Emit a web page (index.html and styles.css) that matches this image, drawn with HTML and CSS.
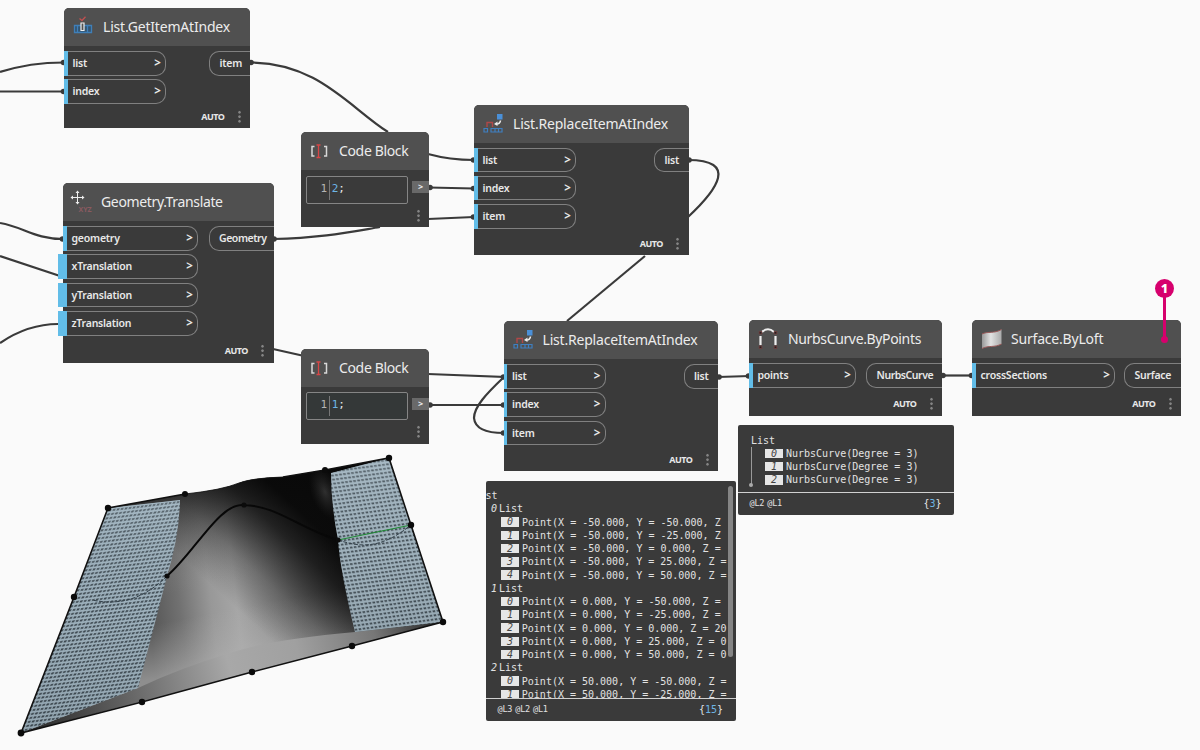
FILE: index.html
```html
<!DOCTYPE html>
<html lang="en">
<head>
<meta charset="utf-8">
<title>Surface by loft graph</title>
<link rel="stylesheet" href="styles.css">
</head>
<body>
<main class="canvas">
<svg class="layer" width="1200" height="750" viewBox="0 0 1200 750">
  <defs>
    <linearGradient id="body" gradientUnits="userSpaceOnUse" x1="145" y1="585" x2="355" y2="560">
      <stop offset="0" stop-color="#555"/><stop offset=".15" stop-color="#717171"/><stop offset=".3" stop-color="#989898"/><stop offset=".42" stop-color="#a6a6a6"/><stop offset=".6" stop-color="#8c8c8c"/><stop offset="1" stop-color="#4a4a4a"/>
    </linearGradient>
    <linearGradient id="shade" gradientUnits="userSpaceOnUse" x1="240" y1="612" x2="318" y2="528">
      <stop offset="0" stop-color="#111" stop-opacity="0"/><stop offset=".35" stop-color="#111" stop-opacity=".3"/><stop offset=".75" stop-color="#0c0c0c" stop-opacity=".8"/><stop offset="1" stop-color="#060606" stop-opacity=".95"/>
    </linearGradient>
    <linearGradient id="fall" gradientUnits="userSpaceOnUse" x1="240" y1="480" x2="275" y2="655">
      <stop offset="0" stop-color="#222" stop-opacity=".7"/><stop offset=".2" stop-color="#444" stop-opacity=".35"/><stop offset=".55" stop-color="#999" stop-opacity="0"/><stop offset=".7" stop-color="#b0b0b0" stop-opacity="0"/><stop offset="1" stop-color="#b4b4b4" stop-opacity=".6"/>
    </linearGradient>
    <radialGradient id="glow" gradientUnits="userSpaceOnUse" cx="0" cy="0" r="1" gradientTransform="translate(325 492) rotate(70) scale(28 14)">
      <stop offset="0" stop-color="#555" stop-opacity=".5"/><stop offset="1" stop-color="#333" stop-opacity="0"/>
    </radialGradient>
    <linearGradient id="lip" gradientUnits="userSpaceOnUse" x1="21" y1="733" x2="443" y2="622">
      <stop offset="0" stop-color="#222"/><stop offset=".25" stop-color="#626262"/><stop offset=".5" stop-color="#a8a8a8"/><stop offset=".66" stop-color="#a0a0a0"/><stop offset=".84" stop-color="#777"/><stop offset="1" stop-color="#222"/>
    </linearGradient>
    <linearGradient id="tint" x1="0" y1="0" x2="0" y2="1">
      <stop offset="0" stop-color="#a9bac4" stop-opacity=".3"/><stop offset=".45" stop-color="#6c7a83" stop-opacity=".12"/><stop offset="1" stop-color="#333d44" stop-opacity=".15"/>
    </linearGradient>
    <pattern id="meshL" width="4" height="4" patternUnits="userSpaceOnUse" patternTransform="matrix(1 -.12 -.4 1 0 0)">
      <rect width="4" height="4" fill="#a4b8c4"/><rect width="2.700" height="1.900" x=".7" y="1" fill="#38434b"/>
    </pattern>
    <pattern id="meshR" width="4" height="4" patternUnits="userSpaceOnUse" patternTransform="matrix(1 -.13 .26 1 0 0)">
      <rect width="4" height="4" fill="#a8bbc6"/><rect width="2.600" height="1.700" x=".7" y="1" fill="#3d4850"/>
    </pattern>
    <clipPath id="outline"><path d="M108 508L185 494Q222 490 239 483Q252 478 283 477L325 470L389 458L411 525L443 622L352 646L252 672L142 702L21 733L74 597Z"/></clipPath>
  </defs>

  <!-- lofted surface -->
  <g clip-path="url(#outline)">
    <rect x="15" y="450" width="435" height="290" fill="url(#body)"/>
    <rect x="15" y="450" width="435" height="290" fill="url(#fall)"/>
    <rect x="15" y="450" width="435" height="290" fill="url(#shade)"/>
    <rect x="290" y="460" width="60" height="70" fill="url(#glow)"/>
    <path d="M443 622L355 632Q268 640 230 653Q180 668 138 688L21 733L252 672L443 622Z" fill="url(#lip)"/>
    <path d="M108 508L180 500Q179 537 167 576L138 688L21 733L74 597Z" fill="url(#meshL)"/>
    <path d="M108 508L180 500Q179 537 167 576L138 688L21 733L74 597Z" fill="url(#tint)"/>
    <path d="M331 473L389 458L411 525L443 622L355 632Q340 570 338 540Q331 504 331 473Z" fill="url(#meshR)"/>
    <path d="M331 473L389 458L411 525L443 622L355 632Q340 570 338 540Q331 504 331 473Z" fill="url(#tint)"/>
  </g>
  <g class="edge">
    <path d="M185 494L108 508L74 597L21 733L142 702L252 672L352 646L443 622L411 525L389 458L325 470L283 477"/>
    <path class="edge-thin" d="M185 494Q222 490 239 483Q252 478 283 477"/>
    <path class="edge-curve" d="M167 576C195 552 220 502 244 505C278 506 300 529 338 540"/>
    <path class="edge-dash" d="M167 576C148 595 124 607 92 600M338 540C359 547 380 550 411 525"/>
    <path class="edge-green" d="M338 540L411 525"/>
  </g>
  <g fill="#0b0b0b">
    <circle cx="108" cy="508" r="3.2"/><circle cx="185" cy="494" r="3"/><circle cx="325" cy="470" r="3"/><circle cx="389" cy="458" r="3.2"/><circle cx="411" cy="525" r="3.2"/><circle cx="443" cy="622" r="3.2"/><circle cx="352" cy="646" r="3.2"/><circle cx="252" cy="672" r="3.2"/><circle cx="142" cy="702" r="3.2"/><circle cx="21" cy="733" r="3.4"/><circle cx="74" cy="597" r="3.2"/><circle cx="167" cy="576" r="2.6"/><circle cx="244" cy="505" r="2.6"/><circle cx="338" cy="540" r="2.6"/>
  </g>

  <!-- wires -->
  <g class="wire">
    <path d="M0 72Q30 62.500 64 62.500"/>
    <path d="M0 91.500H64"/>
    <path d="M250 62.500C318 62.500 350 108 388 132"/>
    <path d="M0 223C24 227 34 239 64 239"/>
    <path d="M0 256L60 276"/>
    <path d="M0 343Q28 324 58 324"/>
    <path d="M273 239C322 238 350 232 380 227"/>
    <path d="M428 154Q450 160 474 160"/>
    <path d="M429 187.500L474 188.500"/>
    <path d="M428 219L474 217"/>
    <path d="M688 160C738 160 718 189 688 217"/>
    <path d="M645 256L567 321"/>
    <path d="M273 349L302 355.500"/>
    <path d="M428 374L504 377C486 394 474 407 474 418C475 429 486 433 504 433"/>
    <path d="M429 405H504"/>
    <path d="M718 377L750 376"/>
    <path d="M942 375.500H972"/>
  </g>
  <g fill="#3a3a3a">
    <circle cx="63.500" cy="62.500" r="2.800"/><circle cx="63.500" cy="91.500" r="2.800"/><circle cx="251" cy="62.500" r="2.800"/><circle cx="62.500" cy="239" r="2.800"/><circle cx="274" cy="239" r="2.800"/><circle cx="430" cy="187.500" r="2.800"/><circle cx="473.500" cy="160" r="2.800"/><circle cx="473.500" cy="188.500" r="2.800"/><circle cx="473.500" cy="217" r="2.800"/><circle cx="689" cy="160" r="2.800"/><circle cx="430" cy="405" r="2.800"/><circle cx="503.500" cy="377" r="2.800"/><circle cx="503.500" cy="405" r="2.800"/><circle cx="503.500" cy="433" r="2.800"/><circle cx="719" cy="377" r="2.800"/><circle cx="748.500" cy="376" r="2.800"/><circle cx="943" cy="375.500" r="2.800"/><circle cx="971.500" cy="375.500" r="2.800"/>
  </g>
</svg>

<section class="node n-get">
  <header><svg class="icon" width="20" height="22" viewBox="0 0 20 22" fill="none"><path d="M1.500 9.500H18.500V16.500H1.500Z" fill="#34546f"/><path d="M1.500 9.500H18.500V16.500H1.500ZM4.500 10V16M14.500 10V16" stroke="#3f7fb8" stroke-width="1.300"/><path d="M8 7H11V14.500H8Z" fill="#505050" stroke="#eee" stroke-width="1.200"/><path d="M6.500 2.500L9 4.500L12.500 .8" stroke="#c05050" stroke-width="1.300"/></svg><h2>List.GetItemAtIndex</h2></header>
  <div class="ports"><div class="ins"><div class="in"><span>list</span><i>&gt;</i></div><div class="in"><span>index</span><i>&gt;</i></div></div><div class="out">item</div></div>
  <footer>AUTO<b class="dots"></b></footer>
</section>

<section class="node n-translate">
  <header><svg class="icon" width="24" height="24" viewBox="0 0 24 24" fill="none"><path d="M7.500 1.500V13.500M1.500 7.500H13.500" stroke="#eee"/><path d="M5.500 3L7.500 .5L9.500 3ZM5.500 12L7.500 14.500L9.500 12ZM3 5.500L.5 7.500L3 9.500ZM12 5.500L14.500 7.500L12 9.500Z" fill="#eee"/><text class="xyz" x="8.500" y="21.500">XYZ</text></svg><h2>Geometry.Translate</h2></header>
  <div class="ports"><div class="ins"><div class="in"><span>geometry</span><i>&gt;</i></div><div class="in wide"><span>xTranslation</span><i>&gt;</i></div><div class="in wide"><span>yTranslation</span><i>&gt;</i></div><div class="in wide"><span>zTranslation</span><i>&gt;</i></div></div><div class="out">Geometry</div></div>
  <footer>AUTO<b class="dots"></b></footer>
</section>

<section class="node code n-code1">
  <header><svg class="icon" width="18" height="16" viewBox="0 0 18 16" fill="none"><path d="M4.500 3.500H2V13H4.500M14 3.500H16.500V13H14" stroke="#d8d8d8" stroke-width="1.500"/><path d="M6.500 2H10.500M8.500 2V14.500M6.500 14.500H10.500" stroke="#d64545" stroke-width="1.300"/></svg><h2>Code Block</h2></header>
  <div class="code-row"><div class="editor"><span class="line">1</span><span class="num">2</span>;</div><div class="tab">&gt;</div></div>
  <footer><b class="dots"></b></footer>
</section>

<section class="node n-rep1">
  <header><svg class="icon" width="20" height="22" viewBox="0 0 20 22" fill="none"><path d="M14 1H19.500V6.500H14Z" fill="#4a90d9"/><path d="M4 14V9.500H9.500V14" stroke="#b04848" stroke-width="1.400"/><path d="M1 15.500H4.500V19H1ZM8 15.500H12V19H8ZM12 15.500H15.500V19H12ZM15.500 15.500H19V19H15.500Z" stroke="#3f7fc0" stroke-width="1.200"/><path d="M17.500 7.500Q17 11 13.500 11" stroke="#eee" stroke-width="1.600"/><path d="M14.500 8.500L11 11L14.500 13Z" fill="#eee"/></svg><h2>List.ReplaceItemAtIndex</h2></header>
  <div class="ports"><div class="ins"><div class="in"><span>list</span><i>&gt;</i></div><div class="in"><span>index</span><i>&gt;</i></div><div class="in"><span>item</span><i>&gt;</i></div></div><div class="out">list</div></div>
  <footer>AUTO<b class="dots"></b></footer>
</section>

<section class="node code n-code2">
  <header><svg class="icon" width="18" height="16" viewBox="0 0 18 16" fill="none"><path d="M4.500 3.500H2V13H4.500M14 3.500H16.500V13H14" stroke="#d8d8d8" stroke-width="1.500"/><path d="M6.500 2H10.500M8.500 2V14.500M6.500 14.500H10.500" stroke="#d64545" stroke-width="1.300"/></svg><h2>Code Block</h2></header>
  <div class="code-row"><div class="editor active"><span class="line">1</span><span class="num">1</span>;</div><div class="tab">&gt;</div></div>
  <footer><b class="dots"></b></footer>
</section>

<section class="node n-rep2">
  <header><svg class="icon" width="20" height="22" viewBox="0 0 20 22" fill="none"><path d="M14 1H19.500V6.500H14Z" fill="#4a90d9"/><path d="M4 14V9.500H9.500V14" stroke="#b04848" stroke-width="1.400"/><path d="M1 15.500H4.500V19H1ZM8 15.500H12V19H8ZM12 15.500H15.500V19H12ZM15.500 15.500H19V19H15.500Z" stroke="#3f7fc0" stroke-width="1.200"/><path d="M17.500 7.500Q17 11 13.500 11" stroke="#eee" stroke-width="1.600"/><path d="M14.500 8.500L11 11L14.500 13Z" fill="#eee"/></svg><h2>List.ReplaceItemAtIndex</h2></header>
  <div class="ports"><div class="ins"><div class="in"><span>list</span><i>&gt;</i></div><div class="in"><span>index</span><i>&gt;</i></div><div class="in"><span>item</span><i>&gt;</i></div></div><div class="out">list</div></div>
  <footer>AUTO<b class="dots"></b></footer>
</section>

<section class="node n-nurbs">
  <header><svg class="icon" width="20" height="24" viewBox="0 0 20 24" fill="none"><path d="M2.500 18V9M17.500 18V9" stroke="#eee" stroke-width="2.200"/><path d="M4 5Q10 -.5 16 5" stroke="#eee" stroke-width="2"/><path d="M1.200 4.500H3.800V7H1.200ZM16.200 4.500H18.800V7H16.200ZM1.200 19H3.800V21.500H1.200ZM16.200 19H18.800V21.500H16.200Z" fill="#222" stroke="#804040" stroke-width=".7"/></svg><h2>NurbsCurve.ByPoints</h2></header>
  <div class="ports"><div class="ins"><div class="in"><span>points</span><i>&gt;</i></div></div><div class="out">NurbsCurve</div></div>
  <footer>AUTO<b class="dots"></b></footer>
</section>

<section class="node n-loft">
  <header><svg class="icon" width="22" height="22" viewBox="0 0 22 22"><defs><linearGradient id="sheet"><stop offset="0" stop-color="#999"/><stop offset=".45" stop-color="#e2e2e2"/><stop offset="1" stop-color="#aaa"/></linearGradient></defs><path d="M1 6C7 3 13 6 20.500 1.500V16C13 20 8 17 1 20.500Z" fill="url(#sheet)"/><path d="M1 6C7 3 13 6 20.500 1.500M1 20.500C8 17 13 20 20.500 16" fill="none" stroke="#9b5a5a"/></svg><h2>Surface.ByLoft</h2></header>
  <div class="ports"><div class="ins"><div class="in"><span>crossSections</span><i>&gt;</i></div></div><div class="out">Surface</div></div>
  <footer>AUTO<b class="dots"></b></footer>
</section>

<section class="preview p-points">
  <div class="rows">
    <div class="root">st</div>
    <div class="group"><em>0</em>List</div>
    <div class="row"><em>0</em>Point(X = -50.000, Y = -50.000, Z</div>
    <div class="row"><em>1</em>Point(X = -50.000, Y = -25.000, Z</div>
    <div class="row"><em>2</em>Point(X = -50.000, Y = 0.000, Z =</div>
    <div class="row"><em>3</em>Point(X = -50.000, Y = 25.000, Z =</div>
    <div class="row"><em>4</em>Point(X = -50.000, Y = 50.000, Z =</div>
    <div class="group"><em>1</em>List</div>
    <div class="row"><em>0</em>Point(X = 0.000, Y = -50.000, Z =</div>
    <div class="row"><em>1</em>Point(X = 0.000, Y = -25.000, Z =</div>
    <div class="row"><em>2</em>Point(X = 0.000, Y = 0.000, Z = 20</div>
    <div class="row"><em>3</em>Point(X = 0.000, Y = 25.000, Z = 0</div>
    <div class="row"><em>4</em>Point(X = 0.000, Y = 50.000, Z = 0</div>
    <div class="group"><em>2</em>List</div>
    <div class="row"><em>0</em>Point(X = 50.000, Y = -50.000, Z =</div>
    <div class="row"><em>1</em>Point(X = 50.000, Y = -25.000, Z =</div>
  </div>
  <div class="summary"><span class="levels"><span>@L3</span><span>@L2</span><span>@L1</span></span><span>{<b>15</b>}</span></div>
  <div class="scroll"></div>
</section>

<section class="preview p-curves">
  <div class="rows">
    <div class="root">List</div>
    <div class="row"><em>0</em>NurbsCurve(Degree = 3)</div>
    <div class="row"><em>1</em>NurbsCurve(Degree = 3)</div>
    <div class="row"><em>2</em>NurbsCurve(Degree = 3)</div>
  </div>
  <div class="summary"><span class="levels"><span>@L2</span><span>@L1</span></span><span>{<b>3</b>}</span></div>
  <div class="stem"></div>
</section>

<div class="callout"><span>1</span></div>
</main>
</body>
</html>
```
FILE: styles.css
```css
* { box-sizing: border-box; }
body { margin: 0; background: #fafafa; font-family: "Noto Sans", "Open Sans", sans-serif; }
.canvas { position: relative; width: 1200px; height: 750px; overflow: hidden; background: #fafafa; }
.layer { position: absolute; left: 0; top: 0; }

.wire path { fill: none; stroke: #3a3a3a; stroke-width: 2.2; }
.edge path { fill: none; stroke: #111; stroke-width: 1.6; }
.edge .edge-thin { stroke-width: .8; }
.edge .edge-curve { stroke-width: 2; stroke: #080808; }
.edge .edge-dash { stroke-width: 1; stroke: #35424b; stroke-dasharray: 4 1.5; }
.edge .edge-green { stroke-width: 1.2; stroke: #1f8a35; }

/* nodes on the graph canvas */
.node { position: absolute; display: flex; flex-direction: column; background: #3a3a3a; border-radius: 5px 5px 0 0; color: #e8e8e8; }
.node header { flex: none; display: flex; align-items: center; height: 38px; padding-left: 9px; background: #505050; border-radius: 5px 5px 0 0; }
.node .icon { flex: none; margin-right: var(--gap, 10px); }
.node h2 { margin: 0; font-size: 14px; line-height: 20px; font-weight: 400; letter-spacing: var(--track, -.2px); white-space: nowrap; color: #ececec; }
.xyz { font: 700 7px "Noto Sans", sans-serif; fill: #8a5a60; }
.ports { display: flex; justify-content: space-between; align-items: flex-start; padding-top: 5px; }
.ins { display: flex; flex-direction: column; gap: 3.8px; width: var(--in, 102px); }
.in, .out { height: 24.600px; border: 1px solid #808080; font-size: 10.500px; line-height: 22.500px; font-weight: 600; white-space: nowrap; }
.in { position: relative; display: flex; justify-content: space-between; padding: 0 4.500px 0 8.500px; border-left: 0; border-radius: 0 10px 10px 0; letter-spacing: -.22px; }
.in::before { content: ""; position: absolute; left: 0; top: -1px; bottom: -1px; width: 3.500px; background: #62bde8; }
.in.wide::before { left: -5px; width: 8.500px; }
.in i { font-style: normal; font-size: 11.500px; font-weight: 700; }
.out { padding: 0 0 0 9.500px; border-right: 0; border-radius: 10px 0 0 10px; width: var(--out, 41px); line-height: 23px; letter-spacing: var(--out-track, -.45px); }
.node footer { display: flex; justify-content: flex-end; align-items: center; gap: 13px; margin-top: auto; height: 24px; padding-right: 9.500px; font-size: 9px; font-weight: 700; letter-spacing: -.45px; }
.dots { width: 3px; height: 13px; background: radial-gradient(circle, #858585 1px, transparent 1.500px) 0 0 / 3px 4.500px; }

.n-get { left: 64px; top: 8px; width: 186px; height: 120px; --out-track: -.25px; }
.n-translate { left: 63px; top: 183px; width: 210.500px; height: 179.500px; --in: 135px; --out: 65px; --gap: 7px; --track: -.35px; }
.n-translate header { padding-left: 7px; }
.n-code1 { left: 301px; top: 132px; width: 128px; height: 95px; --gap: 11px; --track: -.35px; }
.n-rep1 { left: 474px; top: 104.500px; width: 214.500px; height: 150.500px; --out: 34.500px; --out-track: -.2px; }
.n-code2 { left: 301px; top: 348.500px; width: 128px; height: 95px; --gap: 11px; --track: -.35px; }
.n-rep2 { left: 503.500px; top: 321px; width: 214.500px; height: 150px; --out: 34.500px; --out-track: -.2px; }
.n-nurbs { left: 749px; top: 320px; width: 193px; height: 95.500px; --in: 107px; --out: 76px; --track: -.35px; }
.n-loft { left: 972px; top: 320px; width: 209px; height: 95.500px; --in: 143px; --out: 57px; --gap: 8px; --out-track: -.25px; }

/* code block */
.code-row { display: flex; justify-content: space-between; align-items: flex-start; padding: 5.500px 0 0 4.500px; }
.editor { display: flex; width: 102px; height: 28px; padding-left: 14px; border: 1px solid #858585; border-radius: 2px; font: 11px/24px "DejaVu Sans Mono", monospace; }
.editor.active { background: #343838; }
.line { height: 20px; margin: 3px 1.500px 0 0; padding-right: 2px; border-right: 1px solid #777; color: #b5b5b5; line-height: 18px; }
.num { color: #6db5e5; }
.tab { width: 17px; height: 12px; margin-top: 5.500px; background: #696969; font-size: 9px; line-height: 12px; font-weight: 700; text-align: center; }

/* value previews */
.preview { position: absolute; display: flex; flex-direction: column; overflow: hidden; background: #3a3a3a; border-radius: 2px; color: #e2e2e2; font: 10px/13.250px "DejaVu Sans Mono", "Liberation Mono", monospace; white-space: nowrap; }
.rows { flex: 1; min-height: 0; overflow: hidden; }
.root, .group, .row { display: flex; align-items: center; height: 13.250px; }
.row em { width: 18px; height: 9.500px; margin-right: 3px; background: #e6e6e6; color: #444; line-height: 10px; text-align: center; }
.group em { margin-right: 2px; }
.summary { display: flex; justify-content: space-between; align-items: center; flex: none; height: 23px; border-top: 1px solid #d0d0d0; }
.summary b { font-weight: 400; color: #6db5e5; }
.levels { display: flex; gap: 3px; font-size: 8.500px; letter-spacing: -.2px; }
.p-points { left: 485.500px; top: 480.500px; width: 250.500px; height: 240px; }
.p-points .rows { width: 241px; padding-top: 8.500px; }
.p-points .group { padding-left: 5.500px; }
.p-points .row { padding-left: 15.500px; }
.p-points .summary { padding: 0 13px 0 12px; }
.scroll { position: absolute; right: 3px; top: 5px; width: 5px; height: 171px; border-radius: 3px; background: #858585; }
.p-curves { left: 737.500px; top: 425px; width: 216px; height: 89.500px; }
.p-curves .rows { padding: 8.500px 0 0 13.500px; }
.p-curves .row { padding-left: 14px; }
.p-curves .summary { padding: 0 12px 0 12px; }
.stem { position: absolute; left: 13px; top: 22px; width: 1px; height: 37px; background: #999; }
.stem::after { content: ""; position: absolute; left: -1.500px; bottom: -3px; width: 4px; height: 4px; border-radius: 50%; background: #aaa; }

.callout { position: absolute; left: 1155px; top: 279px; width: 19px; height: 64px; }
.callout span { display: block; width: 19px; height: 19px; border-radius: 50%; background: #d6006d; color: #fff; font-size: 13px; line-height: 18px; font-weight: 800; text-align: center; }
.callout::before { content: ""; position: absolute; left: 8px; top: 10px; width: 3px; height: 52px; background: #d6006d; }
.callout::after { content: ""; position: absolute; left: 6px; bottom: 0; width: 7px; height: 7px; border-radius: 50%; background: #d6006d; }
.callout span { position: relative; z-index: 1; }
```
